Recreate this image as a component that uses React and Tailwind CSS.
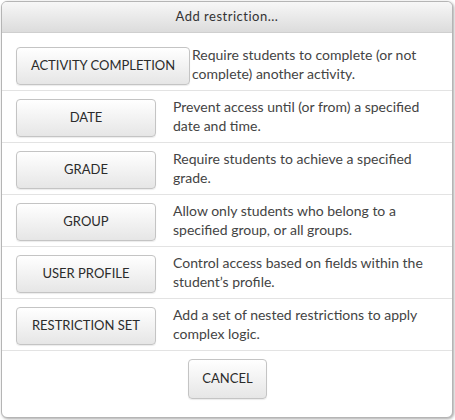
import React from "react";

const rows = [
  ["ACTIVITY COMPLETION", "Require students to complete (or not complete) another activity.", "w-[174px] mr-[2px]"],
  ["DATE", "Prevent access until (or from) a specified date and time.", "w-[140px] mr-[17px]"],
  ["GRADE", "Require students to achieve a specified grade.", "w-[140px] mr-[17px]"],
  ["GROUP", "Allow only students who belong to a specified group, or all groups.", "w-[140px] mr-[17px]"],
  ["USER PROFILE", "Control access based on fields within the student’s profile.", "w-[140px] mr-[17px]"],
  ["RESTRICTION SET", "Add a set of nested restrictions to apply complex logic.", "w-[140px] mr-[17px]"],
];

const btn =
  "h-[38px] shrink-0 rounded-[4px] border border-[#c4c4c4] bg-gradient-to-b from-white to-[#e6e6e6] text-[13px] text-[#2b2b2b] shadow-[0_1px_1px_rgba(0,0,0,0.08)]";

export default function App() {
  return (
    <div className="w-[455px] h-[420px] bg-white p-[1px]" style={{ fontFamily: "Lato, 'Open Sans', sans-serif" }}>
      <div className="w-[452px] h-[417px] rounded-[6px] border border-[#b5b5b5] shadow-[1px_1px_3px_rgba(0,0,0,0.35)] overflow-hidden bg-white">
        <div className="h-[31px] flex items-center justify-center bg-gradient-to-b from-[#f7f7f7] to-[#dcdcdc] border-b border-[#cfcfcf] text-[13px] tracking-[0.5px] text-[#333]">
          Add restriction...
        </div>
        <div className="pt-[6px]">
          {rows.map(([label, desc, w]) => (
            <div key={label} className="flex items-center pl-[14px] pr-3 pt-[8px] pb-[5px] border-b border-[#e3e3e3]">
              <button className={`${btn} ${w}`}>{label}</button>
              <p className="max-w-[262px] text-[14px] leading-[19px] text-[#444] -mt-[4px]">{desc}</p>
            </div>
          ))}
          <div className="flex justify-center pt-[8px] pl-[1px]">
            <button className={`${btn} w-[79px] h-[40px]`}>CANCEL</button>
          </div>
        </div>
      </div>
    </div>
  );
}
